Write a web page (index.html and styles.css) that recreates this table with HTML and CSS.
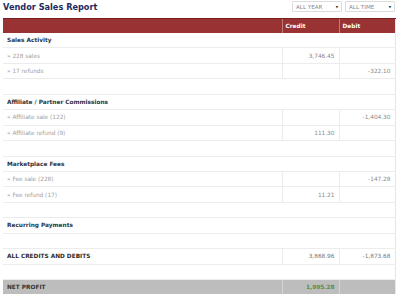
FILE: index.html
```html
<!DOCTYPE html>
<html>
<head>
<meta charset="utf-8">
<link rel="stylesheet" href="styles.css">
</head>
<body>
<div class="page">
  <div class="top">
    <h1 class="title">Vendor Sales Report</h1>
    <div class="filters">
      <div class="select"><span>ALL YEAR</span><span class="caret">&#9660;</span></div>
      <div class="select"><span>ALL TIME</span><span class="caret">&#9660;</span></div>
    </div>
  </div>
  <table class="report">
    <colgroup><col class="c-label"><col class="c-num"><col class="c-num2"></colgroup>
    <thead>
      <tr><th></th><th>Credit</th><th>Debit</th></tr>
    </thead>
    <tbody>
      <tr class="section"><td colspan="3">Sales Activity</td></tr>
      <tr class="item"><td>» 228 sales</td><td class="num">3,746.45</td><td class="num"></td></tr>
      <tr class="item"><td>» 17 refunds</td><td class="num"></td><td class="num">-322.10</td></tr>
      <tr class="blank"><td colspan="3"></td></tr>
      <tr class="section"><td colspan="3">Affiliate / Partner Commissions</td></tr>
      <tr class="item"><td>» Affiliate sale (122)</td><td class="num"></td><td class="num">-1,404.30</td></tr>
      <tr class="item"><td>» Affiliate refund (9)</td><td class="num">111.30</td><td class="num"></td></tr>
      <tr class="blank"><td colspan="3"></td></tr>
      <tr class="section"><td colspan="3">Marketplace Fees</td></tr>
      <tr class="item"><td>» Fee sale (228)</td><td class="num"></td><td class="num">-147.28</td></tr>
      <tr class="item"><td>» Fee refund (17)</td><td class="num">11.21</td><td class="num"></td></tr>
      <tr class="blank"><td colspan="3"></td></tr>
      <tr class="section"><td colspan="3">Recurring Payments</td></tr>
      <tr class="blank"><td colspan="3"></td></tr>
      <tr class="total"><td>ALL CREDITS AND DEBITS</td><td class="num">3,868.96</td><td class="num">-1,873.68</td></tr>
      <tr class="blank"><td colspan="3"></td></tr>
      <tr class="net"><td>NET PROFIT</td><td class="num profit">1,995.28</td><td class="num"></td></tr>
    </tbody>
  </table>
</div>
</body>
</html>
```
FILE: styles.css
```css
html, body {
  margin: 0;
  padding: 0;
  background: #ffffff;
}
body {
  font-family: "DejaVu Sans", Verdana, sans-serif;
  color: #333333;
}
.page {
  padding: 1px 5px 0 3px;
}
.top {
  display: flex;
  justify-content: space-between;
  align-items: flex-start;
  height: 17px;
}
.title {
  margin: 0;
  font-size: 8.2px;
  font-weight: bold;
  color: #1e2b5e;
  line-height: 12px;
}
.filters {
  display: flex;
  gap: 3px;
}
.select {
  box-sizing: border-box;
  width: 50px;
  height: 11px;
  border: 1px solid #dcdcdc;
  border-radius: 1px;
  display: flex;
  justify-content: space-between;
  align-items: center;
  padding: 0 3px 0 3px;
  font-size: 5.6px;
  color: #8a8a8a;
}
.select .caret {
  font-size: 3px;
  color: #333;
}
.report {
  width: 392px;
  border-collapse: collapse;
  table-layout: fixed;
  font-size: 5.8px;
  border-right: 1px solid #e6e6e6;
}
.c-label { width: 279px; }
.c-num { width: 57px; }
.c-num2 { width: 56px; }
.report th {
  background: #993333;
  border-top: 1px solid #7a1f1f;
  border-left: 1px solid #c27a7a;
  color: #ffffff;
  font-weight: bold;
  text-align: left;
  height: 14px;
  padding: 0 0 0 3px;
}
.report th:first-child {
  border-left: none;
}
.report td {
  height: 14.44px;
  padding: 0 4px 0 4px;
  border-bottom: 1px solid #ececec;
  white-space: nowrap;
  overflow: hidden;
}
.report td.num {
  text-align: right;
  border-left: 1px solid #ececec;
}
.section td {
  font-weight: bold;
  color: #2c3440;
}
.item td {
  color: #a0a0a0;
}
.item td.num {
  color: #888888;
}
.total td {
  font-weight: bold;
  color: #2a2a2a;
}
.total td.num {
  font-weight: normal;
  color: #777777;
}
.net td {
  background: #bdbdbd;
  font-weight: bold;
  color: #333333;
  border-bottom: none;
}
.net td.num {
  border-left: 1px solid #d4d4d4;
}
.net td.profit {
  color: #4f8f4f;
}
```
